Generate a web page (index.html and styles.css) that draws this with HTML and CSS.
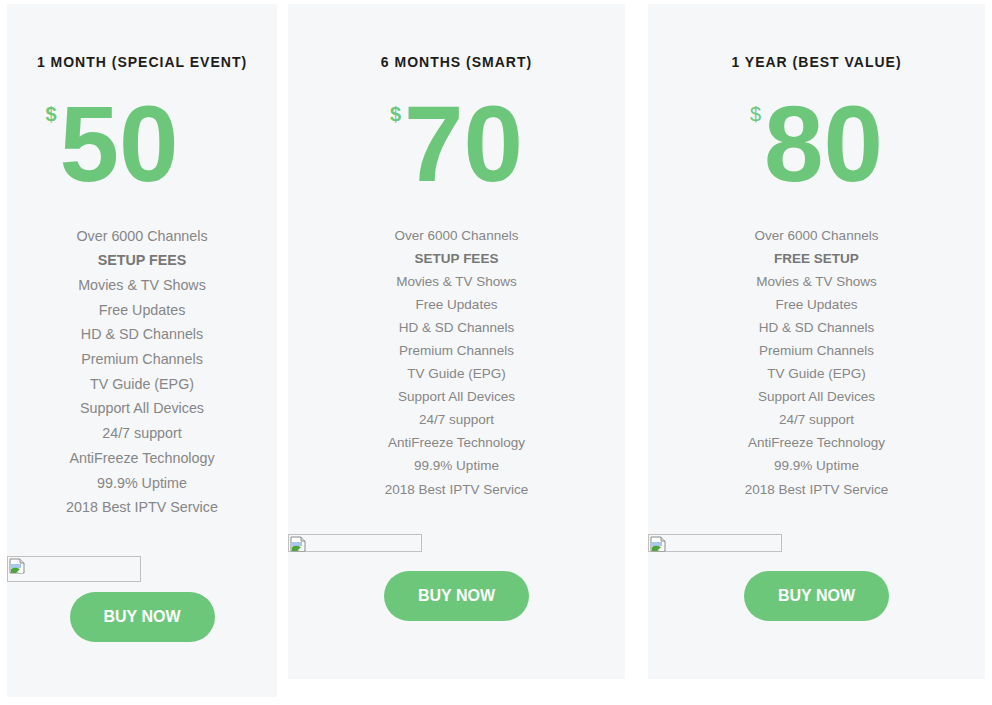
FILE: index.html
```html
<!DOCTYPE html>
<html>
<head>
<meta charset="utf-8">
<link rel="stylesheet" href="styles.css">
</head>
<body>
<div class="plans">
  <div class="card card-narrow">
    <h3 class="title">1 MONTH (SPECIAL EVENT)</h3>
    <div class="price price-shift"><span class="cur bold">$</span><span class="amt">50</span></div>
    <ul class="features loose">
      <li>Over 6000 Channels</li>
      <li class="strong">SETUP FEES</li>
      <li>Movies &amp; TV Shows</li>
      <li>Free Updates</li>
      <li>HD &amp; SD Channels</li>
      <li>Premium Channels</li>
      <li>TV Guide (EPG)</li>
      <li>Support All Devices</li>
      <li>24/7 support</li>
      <li>AntiFreeze Technology</li>
      <li>99.9% Uptime</li>
      <li>2018 Best IPTV Service</li>
    </ul>
    <span class="img img-tall"><svg width="16" height="16" viewBox="0 0 16 16"><path d="M1 1h10l4 4v10H1z" fill="#fff" stroke="#8a8a8a"/><path d="M11 1v4h4" fill="#e6e6e6" stroke="#8a8a8a"/><path d="M2 6h10v4H2z" fill="#a9c8ee"/><path d="M2 15V11c3-2 6-1 9 0l-4 4z" fill="#4ea43a"/><path d="M9 15l5-5v5z" fill="#fff"/></svg></span>
    <div class="btn-row btn-row-a"><a class="btn">BUY NOW</a></div>
  </div>

  <div class="card card-wide">
    <h3 class="title">6 MONTHS (SMART)</h3>
    <div class="price"><span class="cur bold">$</span><span class="amt">70</span></div>
    <ul class="features">
      <li>Over 6000 Channels</li>
      <li class="strong">SETUP FEES</li>
      <li>Movies &amp; TV Shows</li>
      <li>Free Updates</li>
      <li>HD &amp; SD Channels</li>
      <li>Premium Channels</li>
      <li>TV Guide (EPG)</li>
      <li>Support All Devices</li>
      <li>24/7 support</li>
      <li>AntiFreeze Technology</li>
      <li>99.9% Uptime</li>
      <li>2018 Best IPTV Service</li>
    </ul>
    <span class="img img-short"><svg width="16" height="16" viewBox="0 0 16 16"><path d="M1 1h10l4 4v10H1z" fill="#fff" stroke="#8a8a8a"/><path d="M11 1v4h4" fill="#e6e6e6" stroke="#8a8a8a"/><path d="M2 6h10v4H2z" fill="#a9c8ee"/><path d="M2 15V11c3-2 6-1 9 0l-4 4z" fill="#4ea43a"/><path d="M9 15l5-5v5z" fill="#fff"/></svg></span>
    <div class="btn-row btn-row-b"><a class="btn">BUY NOW</a></div>
  </div>

  <div class="card card-wide card-last">
    <h3 class="title">1 YEAR (BEST VALUE)</h3>
    <div class="price"><span class="cur">$</span><span class="amt">80</span></div>
    <ul class="features">
      <li>Over 6000 Channels</li>
      <li class="strong">FREE SETUP</li>
      <li>Movies &amp; TV Shows</li>
      <li>Free Updates</li>
      <li>HD &amp; SD Channels</li>
      <li>Premium Channels</li>
      <li>TV Guide (EPG)</li>
      <li>Support All Devices</li>
      <li>24/7 support</li>
      <li>AntiFreeze Technology</li>
      <li>99.9% Uptime</li>
      <li>2018 Best IPTV Service</li>
    </ul>
    <span class="img img-short"><svg width="16" height="16" viewBox="0 0 16 16"><path d="M1 1h10l4 4v10H1z" fill="#fff" stroke="#8a8a8a"/><path d="M11 1v4h4" fill="#e6e6e6" stroke="#8a8a8a"/><path d="M2 6h10v4H2z" fill="#a9c8ee"/><path d="M2 15V11c3-2 6-1 9 0l-4 4z" fill="#4ea43a"/><path d="M9 15l5-5v5z" fill="#fff"/></svg></span>
    <div class="btn-row btn-row-b"><a class="btn">BUY NOW</a></div>
  </div>
</div>
</body>
</html>
```

FILE: styles.css
```css
* { box-sizing: border-box; }
html, body { margin: 0; padding: 0; background: #fff; }
body { font-family: "Liberation Sans", Arial, sans-serif; }

.plans {
  display: flex;
  align-items: flex-start;
  padding: 4px 7px 0 7px;
}

.card {
  background: #f6f7f9;
  display: flex;
  flex-direction: column;
  padding-top: 48px;
}
.card-narrow { width: 270px; margin-right: 11px; padding-bottom: 55px; }
.card-wide { width: 337px; padding-bottom: 58px; }
.card-last { margin-left: 23px; }

.title {
  margin: 0;
  font-size: 14px;
  line-height: 20px;
  font-weight: 700;
  letter-spacing: 1px;
  color: #1d1d1d;
  text-align: center;
}

.price {
  display: flex;
  justify-content: center;
  align-items: flex-start;
  margin-top: 20px;
  color: #6cc77a;
}
.price-shift { padding-right: 60px; }
.cur {
  font-size: 20px;
  line-height: 1;
  margin-top: 12px;
  margin-right: 3px;
}
.cur.bold { font-weight: 700; }
.amt {
  font-size: 107px;
  line-height: 104px;
  font-weight: 700;
}

.features {
  list-style: none;
  margin: 27.5px 0 0 0;
  padding: 0;
  text-align: center;
  font-size: 13.5px;
  line-height: 23.1px;
  color: #868686;
}
.features.loose { line-height: 24.7px; font-size: 14.3px; }
.features .strong { font-weight: 700; color: #777; }

.img {
  display: block;
  width: 134px;
  border: 1px solid #c0c0c0;
  padding: 1px;
  line-height: 0;
}
.img-tall { height: 26px; margin-top: 36px; }
.img-short { height: 18px; margin-top: 33px; }

.btn-row { display: flex; justify-content: center; }
.btn-row-a { margin-top: 10px; }
.btn-row-b { margin-top: 19px; }

.btn {
  display: flex;
  align-items: center;
  justify-content: center;
  width: 145px;
  height: 50px;
  border-radius: 25px;
  background: #6cc77a;
  color: #fff;
  font-size: 16px;
  font-weight: 700;
  text-decoration: none;
}
```
